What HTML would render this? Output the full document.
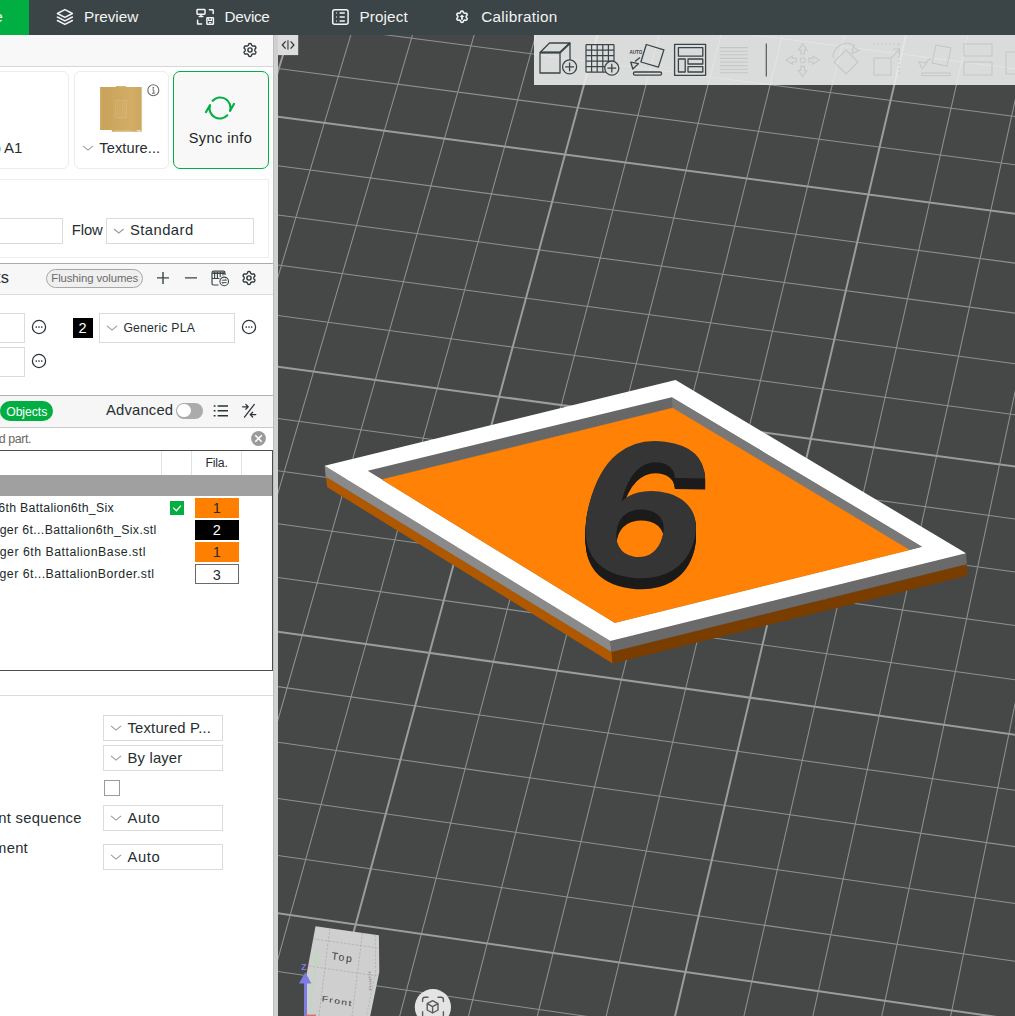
<!DOCTYPE html>
<html lang="en"><head><meta charset="utf-8"><title>Bambu Studio</title>
<style>
html,body{margin:0;padding:0;background:#fff}
body{width:1015px;height:1016px;overflow:hidden;position:relative;background:#fff;font-family:"Liberation Sans",sans-serif;color:#262E30}
.a{position:absolute;box-sizing:border-box}
.t{position:absolute;white-space:nowrap;line-height:1}
svg{position:absolute;overflow:hidden}
</style></head><body>

<div class="a" style="left:0.00px;top:35.00px;width:273.50px;height:31.50px;background:#F8F8F8;border-bottom:1px solid #D6D6D6"></div>
<div class="a" style="left:-10.00px;top:71.00px;width:78.50px;height:98.00px;border:1px solid #ECECEC;border-radius:6px;background:#fff"></div>
<div class="a" style="left:73.50px;top:71.00px;width:95.00px;height:98.00px;border:1px solid #ECECEC;border-radius:6px;background:#fff"></div>
<div class="a" style="left:173.00px;top:71.00px;width:96.20px;height:98.00px;border:1px solid #00AE42;border-radius:7px;background:#F8F8F8"></div>
<div class="t" style="left:-76.01px;top:140.00px;font-size:15px;color:#262E30;">Bambu Lab A1</div>
<svg style="left:98px;top:84px" width="48" height="50" viewBox="98 84 48 50"><defs><linearGradient id="pg" x1="0" x2="1" y1="0" y2="0"><stop offset="0" stop-color="#C8A259"/><stop offset=".75" stop-color="#D2AD66"/><stop offset="1" stop-color="#CDA75F"/></linearGradient></defs><path d="M100.1 87h15.8v-1.1h10v1.1h15.8v43.1v1.6h-29.9v-1.6h-11.7z" fill="url(#pg)"/><rect x="115.2" y="100.8" width="11.6" height="16.6" fill="none" stroke="#DCC089" stroke-width=".6" opacity=".8"/><path d="M117.6 102v14M120 102v16M122.6 102v14M125 100v17" stroke="#DBBE86" stroke-width=".5" opacity=".8"/><path d="M101.6 89v38" stroke="#D9BC80" stroke-width=".5" opacity=".7"/><path d="M114 131h18" stroke="#E3CC9A" stroke-width=".8"/><path d="M136.8 130.8h4" stroke="#F4EAD2" stroke-width="1.1"/><path d="M117 86.6h7.6" stroke="#DDC28C" stroke-width=".6"/></svg>
<svg style="left:146px;top:83px" width="15" height="15" viewBox="0 0 15 15"><circle cx="7.3" cy="7.3" r="5.5" fill="#fff" stroke="#6B6B6B" stroke-width="1.1"/><circle cx="7.3" cy="4.8" r=".9" fill="#6B6B6B"/><path d="M6.3 6.9h1.5v3.2M6 10.2h2.8" fill="none" stroke="#6B6B6B" stroke-width="1"/></svg>
<svg style="left:82.00px;top:144.20px" width="12.00" height="8" viewBox="0 0 12.00 8"><path d="M1 1.90L6.00 6.10L11.00 1.90" fill="none" stroke="#9A9A9A" stroke-width="1.1"/></svg>
<div class="t" style="left:99.30px;top:140.70px;font-size:14.6px;color:#262E30;letter-spacing:0.095px;">Texture...</div>
<svg style="left:204.4px;top:91.8px" width="32" height="32" viewBox="-16 -16 32 32"><g fill="none" stroke="#00AE42" stroke-width="2.1" stroke-linecap="round" stroke-linejoin="round"><path d="M-7.3 -7.3A10.3 10.3 0 0 1 10 2.9L14.1 -4.2"/><path d="M7.3 7.3A10.3 10.3 0 0 1 -10 -2.9L-14.1 4.2"/></g></svg>
<div class="t" style="left:188.70px;top:130.75px;font-size:14.5px;color:#1A1F21;letter-spacing:0.440px;">Sync info</div>
<svg style="left:241.00px;top:41.00px" width="18" height="18" viewBox="-9 -9 18 18"><path d="M4.85 0.00L4.85 0.21L4.85 0.42L4.88 0.64L4.95 0.87L5.14 1.14L5.46 1.46L5.75 1.81L5.89 2.14L5.89 2.44L5.82 2.72L5.72 2.98L5.59 3.22L5.44 3.46L5.26 3.69L5.06 3.88L4.80 4.03L4.45 4.07L4.00 4.00L3.56 3.88L3.23 3.85L3.00 3.90L2.80 3.99L2.61 4.09L2.43 4.20L2.24 4.31L2.06 4.42L1.88 4.55L1.72 4.73L1.58 5.02L1.46 5.46L1.31 5.89L1.09 6.17L0.83 6.33L0.56 6.40L0.28 6.44L0.00 6.45L-0.28 6.44L-0.56 6.40L-0.83 6.33L-1.09 6.17L-1.31 5.89L-1.46 5.46L-1.58 5.02L-1.72 4.73L-1.88 4.55L-2.06 4.42L-2.24 4.31L-2.42 4.20L-2.61 4.09L-2.80 3.99L-3.00 3.90L-3.23 3.85L-3.56 3.88L-4.00 4.00L-4.45 4.07L-4.80 4.03L-5.06 3.88L-5.26 3.69L-5.44 3.46L-5.59 3.23L-5.72 2.98L-5.82 2.72L-5.89 2.44L-5.89 2.14L-5.75 1.81L-5.46 1.46L-5.14 1.14L-4.95 0.87L-4.88 0.64L-4.85 0.42L-4.85 0.21L-4.85 0.00L-4.85 -0.21L-4.85 -0.42L-4.88 -0.64L-4.95 -0.87L-5.14 -1.14L-5.46 -1.46L-5.75 -1.81L-5.89 -2.14L-5.89 -2.44L-5.82 -2.72L-5.72 -2.98L-5.59 -3.23L-5.44 -3.46L-5.26 -3.69L-5.06 -3.88L-4.80 -4.03L-4.45 -4.07L-4.00 -4.00L-3.56 -3.88L-3.23 -3.85L-3.00 -3.90L-2.80 -3.99L-2.61 -4.09L-2.43 -4.20L-2.24 -4.31L-2.06 -4.42L-1.88 -4.55L-1.72 -4.73L-1.58 -5.02L-1.46 -5.46L-1.31 -5.89L-1.09 -6.17L-0.83 -6.33L-0.56 -6.40L-0.28 -6.44L-0.00 -6.45L0.28 -6.44L0.56 -6.40L0.83 -6.33L1.09 -6.17L1.31 -5.89L1.46 -5.46L1.58 -5.02L1.72 -4.73L1.88 -4.55L2.06 -4.42L2.24 -4.31L2.42 -4.20L2.61 -4.09L2.80 -3.99L3.00 -3.90L3.23 -3.85L3.56 -3.88L4.00 -4.00L4.45 -4.07L4.80 -4.03L5.06 -3.88L5.26 -3.69L5.44 -3.46L5.59 -3.22L5.72 -2.98L5.82 -2.72L5.89 -2.44L5.89 -2.14L5.75 -1.81L5.46 -1.46L5.14 -1.14L4.95 -0.87L4.88 -0.64L4.85 -0.42L4.85 -0.21Z" fill="none" stroke="#2E3638" stroke-width="1.4" stroke-linejoin="round"/><circle r="2.1" fill="none" stroke="#2E3638" stroke-width="1.4"/></svg>
<div class="a" style="left:-10.00px;top:179.00px;width:279.00px;height:79.00px;border:1px solid #EEEEEE;background:#fff"></div>
<div class="a" style="left:-10.00px;top:218.00px;width:73.00px;height:26.00px;border:1px solid #DBDBDB;background:#fff"></div>
<div class="t" style="left:71.70px;top:222.60px;font-size:14.8px;color:#262E30;letter-spacing:-0.062px;">Flow</div>
<div class="a" style="left:106.00px;top:218.00px;width:148.00px;height:26.00px;border:1px solid #DBDBDB;background:#fff"></div>
<svg style="left:112.80px;top:227.00px" width="11.60" height="8" viewBox="0 0 11.60 8"><path d="M1 1.98L5.80 6.02L10.60 1.98" fill="none" stroke="#9A9A9A" stroke-width="1.1"/></svg>
<div class="t" style="left:130.00px;top:222.60px;font-size:14.8px;color:#262E30;letter-spacing:0.441px;">Standard</div>
<div class="a" style="left:0.00px;top:263.00px;width:273.50px;height:32.00px;background:#F7F7F7;border-top:1px solid #ABABAB;border-bottom:1px solid #DEDEDE"></div>
<div class="t" style="left:-62.19px;top:268.80px;font-size:16.4px;color:#262E30;">Filaments</div>
<div class="a" style="left:46.00px;top:269.30px;width:97.00px;height:18.70px;border:1px solid #A8A8A8;border-radius:10px;background:#EFEFEF"></div>
<div class="t" style="left:51.30px;top:273.30px;font-size:11.4px;color:#6B6B6B;letter-spacing:-0.113px;">Flushing volumes</div>
<svg style="left:155px;top:270px" width="44" height="16" viewBox="155 270 44 16"><path d="M157 277.9h12M163 271.9v12M185 277.9h12" stroke="#3B4446" stroke-width="1.4" fill="none"/></svg>
<svg style="left:210px;top:269px" width="20" height="18" viewBox="210 269 20 18"><g fill="none" stroke="#3B4446" stroke-width="1.2"><path d="M212 278.5v-5.5q0-1.8 1.8-1.8h9.4q1.8 0 1.8 1.8v2"/><path d="M212 278.5h7.5M212 278.5v5q0 1.5 1.5 1.5h5"/><path d="M214.6 272v6M217.4 272v6M220.2 272v5M223 272v3.5" stroke-width="1.1"/><path d="M212.3 273.2h12.5" stroke-width="1.6"/></g><circle cx="224.2" cy="281.4" r="4.3" fill="#F7F7F7" stroke="#3B4446" stroke-width="1.1"/><path d="M221.8 280.2h4.6l-1.2-1.2M226.6 282.6h-4.6l1.2 1.2" fill="none" stroke="#3B4446" stroke-width=".9"/></svg>
<svg style="left:240.00px;top:268.90px" width="18" height="18" viewBox="-9 -9 18 18"><path d="M4.85 0.00L4.85 0.21L4.85 0.42L4.88 0.64L4.95 0.87L5.14 1.14L5.46 1.46L5.75 1.81L5.89 2.14L5.89 2.44L5.82 2.72L5.72 2.98L5.59 3.22L5.44 3.46L5.26 3.69L5.06 3.88L4.80 4.03L4.45 4.07L4.00 4.00L3.56 3.88L3.23 3.85L3.00 3.90L2.80 3.99L2.61 4.09L2.43 4.20L2.24 4.31L2.06 4.42L1.88 4.55L1.72 4.73L1.58 5.02L1.46 5.46L1.31 5.89L1.09 6.17L0.83 6.33L0.56 6.40L0.28 6.44L0.00 6.45L-0.28 6.44L-0.56 6.40L-0.83 6.33L-1.09 6.17L-1.31 5.89L-1.46 5.46L-1.58 5.02L-1.72 4.73L-1.88 4.55L-2.06 4.42L-2.24 4.31L-2.42 4.20L-2.61 4.09L-2.80 3.99L-3.00 3.90L-3.23 3.85L-3.56 3.88L-4.00 4.00L-4.45 4.07L-4.80 4.03L-5.06 3.88L-5.26 3.69L-5.44 3.46L-5.59 3.23L-5.72 2.98L-5.82 2.72L-5.89 2.44L-5.89 2.14L-5.75 1.81L-5.46 1.46L-5.14 1.14L-4.95 0.87L-4.88 0.64L-4.85 0.42L-4.85 0.21L-4.85 0.00L-4.85 -0.21L-4.85 -0.42L-4.88 -0.64L-4.95 -0.87L-5.14 -1.14L-5.46 -1.46L-5.75 -1.81L-5.89 -2.14L-5.89 -2.44L-5.82 -2.72L-5.72 -2.98L-5.59 -3.23L-5.44 -3.46L-5.26 -3.69L-5.06 -3.88L-4.80 -4.03L-4.45 -4.07L-4.00 -4.00L-3.56 -3.88L-3.23 -3.85L-3.00 -3.90L-2.80 -3.99L-2.61 -4.09L-2.43 -4.20L-2.24 -4.31L-2.06 -4.42L-1.88 -4.55L-1.72 -4.73L-1.58 -5.02L-1.46 -5.46L-1.31 -5.89L-1.09 -6.17L-0.83 -6.33L-0.56 -6.40L-0.28 -6.44L-0.00 -6.45L0.28 -6.44L0.56 -6.40L0.83 -6.33L1.09 -6.17L1.31 -5.89L1.46 -5.46L1.58 -5.02L1.72 -4.73L1.88 -4.55L2.06 -4.42L2.24 -4.31L2.42 -4.20L2.61 -4.09L2.80 -3.99L3.00 -3.90L3.23 -3.85L3.56 -3.88L4.00 -4.00L4.45 -4.07L4.80 -4.03L5.06 -3.88L5.26 -3.69L5.44 -3.46L5.59 -3.22L5.72 -2.98L5.82 -2.72L5.89 -2.44L5.89 -2.14L5.75 -1.81L5.46 -1.46L5.14 -1.14L4.95 -0.87L4.88 -0.64L4.85 -0.42L4.85 -0.21Z" fill="none" stroke="#2E3638" stroke-width="1.4" stroke-linejoin="round"/><circle r="2.1" fill="none" stroke="#2E3638" stroke-width="1.4"/></svg>
<div class="a" style="left:-10.00px;top:313.00px;width:34.80px;height:30.00px;border:1px solid #DBDBDB"></div>
<div class="a" style="left:-10.00px;top:347.00px;width:34.80px;height:30.00px;border:1px solid #DBDBDB"></div>
<svg style="left:29.9px;top:317.9px" width="18" height="18" viewBox="-9 -9 18 18"><circle r="6.6" fill="none" stroke="#2B3436" stroke-width="1.25"/><circle cx="-2.7" r=".85" fill="#2B3436"/><circle r=".85" fill="#2B3436"/><circle cx="2.7" r=".85" fill="#2B3436"/></svg>
<svg style="left:29.9px;top:351.9px" width="18" height="18" viewBox="-9 -9 18 18"><circle r="6.6" fill="none" stroke="#2B3436" stroke-width="1.25"/><circle cx="-2.7" r=".85" fill="#2B3436"/><circle r=".85" fill="#2B3436"/><circle cx="2.7" r=".85" fill="#2B3436"/></svg>
<svg style="left:240px;top:317.9px" width="18" height="18" viewBox="-9 -9 18 18"><circle r="6.6" fill="none" stroke="#2B3436" stroke-width="1.25"/><circle cx="-2.7" r=".85" fill="#2B3436"/><circle r=".85" fill="#2B3436"/><circle cx="2.7" r=".85" fill="#2B3436"/></svg>
<div class="a" style="left:73.10px;top:318.10px;width:19.80px;height:19.70px;background:#000"></div>
<div class="t" style="left:78.60px;top:320.75px;font-size:14.5px;color:#fff;">2</div>
<div class="a" style="left:99.00px;top:313.00px;width:136.00px;height:30.00px;border:1px solid #DBDBDB"></div>
<svg style="left:105.70px;top:324.20px" width="12.00" height="8" viewBox="0 0 12.00 8"><path d="M1 1.90L6.00 6.10L11.00 1.90" fill="none" stroke="#9A9A9A" stroke-width="1.1"/></svg>
<div class="t" style="left:123.40px;top:321.90px;font-size:12.2px;color:#262E30;letter-spacing:0.230px;">Generic PLA</div>
<div class="a" style="left:0.00px;top:395.00px;width:273.50px;height:32.50px;background:#F6F6F6;border-top:1px solid #B0B0B0;border-bottom:1px solid #CACACA"></div>
<div class="a" style="left:-20.00px;top:401.00px;width:21.20px;height:20.00px;background:#DADADA;border-radius:10px"></div>
<div class="a" style="left:0.30px;top:401.00px;width:52.50px;height:20.00px;background:#00AE42;border-radius:10px"></div>
<div class="t" style="left:6.20px;top:405.90px;font-size:12.2px;color:#fff;letter-spacing:-0.037px;">Objects</div>
<div class="t" style="left:106.10px;top:402.60px;font-size:14.8px;color:#262E30;letter-spacing:0.159px;">Advanced</div>
<div class="a" style="left:176.30px;top:403.00px;width:26.70px;height:15.60px;background:#ABABAB;border-radius:8px"></div>
<div class="a" style="left:177.30px;top:404.20px;width:13.30px;height:13.30px;background:#fff;border-radius:7px"></div>
<svg style="left:212px;top:403px" width="18" height="16" viewBox="212 403 18 16"><g stroke="#2B3436" stroke-width="1.5" fill="none"><path d="M217.6 405.9h10.4M217.6 410.8h10.4M217.6 415.7h10.4"/><path d="M213.7 405.9h1.8M213.7 410.8h1.8M213.7 415.7h1.8"/></g></svg>
<svg style="left:240px;top:402px" width="18" height="18" viewBox="240 402 18 18"><g stroke="#2B3436" stroke-width="1.25" fill="none" stroke-linecap="round" stroke-linejoin="round"><path d="M244.5 417.2L254.3 404.4"/><path d="M242.6 406.8h5.6M245.8 404.4l2.4 2.4l-2.4 2.4"/><path d="M255.8 414.6h-5.6M252.6 412.2l-2.4 2.4l2.4 2.4"/></g></svg>
<div class="t" style="left:-155.23px;top:432.80px;font-size:12.4px;color:#6E6660;letter-spacing:-0.369px;">Right-click to search object and part.</div>
<svg style="left:250px;top:430px" width="17" height="17" viewBox="-8.5 -8.5 17 17"><circle r="7.4" fill="#9B9B9B"/><path d="M-3.2 -3.2L3.2 3.2M3.2 -3.2L-3.2 3.2" stroke="#fff" stroke-width="1.6"/></svg>
<div class="a" style="left:-10.00px;top:449.80px;width:283.00px;height:221.00px;border:1px solid #4C4C4C;background:#fff"></div>
<div class="a" style="left:161.00px;top:451.00px;width:1.00px;height:24.40px;background:#E2E2E2"></div>
<div class="a" style="left:191.20px;top:451.00px;width:1.00px;height:24.40px;background:#E2E2E2"></div>
<div class="a" style="left:241.10px;top:451.00px;width:1.00px;height:24.40px;background:#E2E2E2"></div>
<div class="t" style="left:205.40px;top:456.85px;font-size:12.3px;color:#262E30;letter-spacing:-0.207px;">Fila.</div>
<div class="a" style="left:0.00px;top:475.40px;width:272.00px;height:21.00px;background:#A0A0A0"></div>
<div class="t" style="left:-68.11px;top:501.85px;font-size:12.3px;color:#20282A;letter-spacing:0.319px;">Challenger 6th Battalion6th_Six</div>
<div class="t" style="left:-44.64px;top:523.85px;font-size:12.3px;color:#20282A;letter-spacing:0.367px;">Challenger 6t...Battalion6th_Six.stl</div>
<div class="t" style="left:-45.68px;top:545.85px;font-size:12.3px;color:#20282A;letter-spacing:0.520px;">Challenger 6th BattalionBase.stl</div>
<div class="t" style="left:-45.56px;top:567.85px;font-size:12.3px;color:#20282A;letter-spacing:0.483px;">Challenger 6t...BattalionBorder.stl</div>
<svg style="left:170px;top:501px" width="14" height="14" viewBox="0 0 14 14"><rect width="14" height="14" fill="#00AE42"/><path d="M3.2 6.6L6.4 9.8L10.9 4.6" fill="none" stroke="#fff" stroke-width="1.3"/></svg>
<div class="a" style="left:195.10px;top:498.00px;width:43.90px;height:19.70px;background:#FF8000;"></div>
<div class="t" style="left:212.87px;top:500.75px;font-size:14.5px;color:#2B2B2B;">1</div>
<div class="a" style="left:195.10px;top:520.10px;width:43.90px;height:19.70px;background:#000;"></div>
<div class="t" style="left:212.87px;top:522.75px;font-size:14.5px;color:#fff;">2</div>
<div class="a" style="left:195.10px;top:542.00px;width:43.90px;height:19.70px;background:#FF8000;"></div>
<div class="t" style="left:212.87px;top:544.75px;font-size:14.5px;color:#2B2B2B;">1</div>
<div class="a" style="left:195.10px;top:564.30px;width:43.90px;height:19.70px;background:#fff;border:1px solid #6A6A6A;"></div>
<div class="t" style="left:212.87px;top:567.75px;font-size:14.5px;color:#2B2B2B;">3</div>
<div class="a" style="left:0.00px;top:695.20px;width:273.50px;height:1.00px;background:#DCDCDC"></div>
<div class="a" style="left:103.00px;top:715.00px;width:120.00px;height:26.00px;border:1px solid #DBDBDB"></div>
<svg style="left:109.70px;top:724.20px" width="12.10" height="8" viewBox="0 0 12.10 8"><path d="M1 1.88L6.05 6.12L11.10 1.88" fill="none" stroke="#9A9A9A" stroke-width="1.1"/></svg>
<div class="t" style="left:127.50px;top:720.60px;font-size:14.8px;color:#262E30;letter-spacing:0.186px;">Textured P...</div>
<div class="a" style="left:103.00px;top:745.00px;width:120.00px;height:26.00px;border:1px solid #DBDBDB"></div>
<svg style="left:109.70px;top:754.20px" width="12.10" height="8" viewBox="0 0 12.10 8"><path d="M1 1.88L6.05 6.12L11.10 1.88" fill="none" stroke="#9A9A9A" stroke-width="1.1"/></svg>
<div class="t" style="left:127.50px;top:750.60px;font-size:14.8px;color:#262E30;letter-spacing:0.180px;">By layer</div>
<div class="a" style="left:103.00px;top:805.00px;width:120.00px;height:26.00px;border:1px solid #DBDBDB"></div>
<svg style="left:109.70px;top:814.20px" width="12.10" height="8" viewBox="0 0 12.10 8"><path d="M1 1.88L6.05 6.12L11.10 1.88" fill="none" stroke="#9A9A9A" stroke-width="1.1"/></svg>
<div class="t" style="left:127.50px;top:810.60px;font-size:14.8px;color:#262E30;letter-spacing:0.588px;">Auto</div>
<div class="a" style="left:103.00px;top:844.00px;width:120.00px;height:26.00px;border:1px solid #DBDBDB"></div>
<svg style="left:109.70px;top:853.20px" width="12.10" height="8" viewBox="0 0 12.10 8"><path d="M1 1.88L6.05 6.12L11.10 1.88" fill="none" stroke="#9A9A9A" stroke-width="1.1"/></svg>
<div class="t" style="left:127.50px;top:849.60px;font-size:14.8px;color:#262E30;letter-spacing:0.588px;">Auto</div>
<div class="a" style="left:104.10px;top:780.20px;width:15.90px;height:15.60px;border:1px solid #9A9A9A;background:#fff"></div>
<div class="t" style="left:-47.63px;top:810.60px;font-size:14.8px;color:#262E30;letter-spacing:0.257px;">Filament sequence</div>
<div class="t" style="left:-74.19px;top:840.60px;font-size:14.8px;color:#262E30;letter-spacing:0.247px;">Auto alignment</div>
<div class="a" style="left:273.00px;top:35.00px;width:5.00px;height:981.00px;background:#D0D0D0;border-left:1px solid #BDBDBD"></div>
<svg style="left:278px;top:35px" width="737" height="981" viewBox="278 35 737 981">
<rect x="278" y="35" width="737" height="981" fill="#464848"/>
<path d="M-55.4 -207.2L-607.7 1330.7M1.9 -200.0L-540.3 1341.0M116.8 -185.4L-405.1 1361.8M174.5 -178.1L-337.2 1372.2M232.2 -170.7L-269.2 1382.6M290.0 -163.4L-201.0 1393.1M406.1 -148.7L-64.3 1414.0M464.2 -141.3L4.4 1424.6M522.5 -133.9L73.1 1435.1M580.9 -126.5L142.1 1445.7M698.0 -111.6L280.4 1466.9M756.7 -104.2L349.8 1477.5M815.5 -96.7L419.3 1488.2M874.5 -89.3L489.0 1498.9M992.7 -74.3L628.9 1520.3M1052.0 -66.7L699.1 1531.1M1111.4 -59.2L769.5 1541.9M1170.9 -51.7L840.0 1552.7M1290.2 -36.5L981.4 1574.4M1350.1 -28.9L1052.4 1585.3M1410.1 -21.3L1123.6 1596.2M1470.1 -13.7L1194.9 1607.1M1590.6 1.6L1338.0 1629.1M1651.1 9.3L1409.8 1640.1M1711.6 16.9L1481.8 1651.1M1772.3 24.6L1553.9 1662.2M1893.9 40.1L1698.7 1684.4M1954.9 47.8L1771.3 1695.5M2016.1 55.6L1844.1 1706.7M2077.3 63.3L1917.1 1717.9M2200.2 78.9L2063.5 1740.4M2261.8 86.7L2137.0 1751.6M2323.5 94.6L2210.6 1762.9M2385.3 102.4L2284.4 1774.2M-55.4 -207.2L2447.3 110.3M-86.7 -119.9L2442.3 204.7M-102.7 -75.6L2439.7 252.7M-118.8 -30.7L2437.2 301.2M-135.0 14.6L2434.6 350.3M-168.1 106.7L2429.3 450.1M-184.9 153.5L2426.6 500.9M-201.9 200.8L2423.8 552.2M-219.1 248.6L2421.1 604.2M-254.0 345.9L2415.5 709.9M-271.8 395.4L2412.6 763.7M-289.8 445.4L2409.7 818.1M-308.0 496.0L2406.8 873.2M-344.9 599.0L2400.9 985.3M-363.7 651.4L2397.8 1042.4M-382.8 704.3L2394.8 1100.2M-402.0 757.9L2391.7 1158.7M-441.2 867.0L2385.4 1277.8M-461.2 922.6L2382.1 1338.5M-481.3 978.8L2378.9 1400.0M-501.8 1035.7L2375.6 1462.2M-543.4 1151.5L2368.8 1589.1M-564.6 1210.5L2365.4 1653.7M-586.0 1270.2L2361.9 1719.2M-607.7 1330.7L2358.4 1785.6" stroke="#8E918F" stroke-width="1.05" fill="none"/>
<path d="M59.3 -192.7L-472.8 1351.4M348.0 -156.0L-132.7 1403.5M639.4 -119.1L211.1 1456.3M933.5 -81.8L558.9 1509.6M1230.5 -44.1L910.6 1563.5M1530.3 -6.1L1266.4 1618.1M1833.0 32.4L1626.2 1673.3M2138.7 71.1L1990.2 1729.1M-71.0 -163.8L2444.8 157.2M-151.5 60.4L2431.9 399.9M-236.5 297.0L2418.3 656.7M-326.3 547.2L2403.9 928.9M-421.5 812.2L2388.5 1217.9M-522.4 1093.2L2372.2 1525.2" stroke="#9A9D9A" stroke-width="2" fill="none"/>
<polygon points="325.8,476.9 611.5,652.2 612.7,663.5 327.3,487.3" fill="#B05800"/>
<polygon points="611.5,652.2 966.9,564.4 967.2,575.7 612.7,663.5" fill="#7A3D00"/>
<polygon points="324.6,465.8 610.3,641.0 611.5,652.2 325.8,476.9" fill="#8A8A8A"/>
<polygon points="610.3,641.0 966.0,553.2 966.9,564.4 611.5,652.2" fill="#6A6A6A"/>
<path d="M325.8 476.9L611.5 652.2" stroke="#B35A00" stroke-width=".5"/>
<path d="M611.5 652.2L966.9 564.4" stroke="#7A3D00" stroke-width=".5"/>
<polygon points="324.6,465.8 675.6,380.1 966.0,553.2 610.3,641.0" fill="#FFFFFF"/>
<polygon points="367.7,470.8 671.7,397.2 922.0,546.7 614.8,622.7" fill="#676767"/>
<polygon points="671.7,397.2 922.0,546.7 909.6,549.9 672.6,407.9" fill="#787878"/>
<polygon points="382.0,479.5 672.6,407.9 909.6,549.9 614.8,622.7" fill="#FF8106" stroke="#FF8106" stroke-width=".35" stroke-linejoin="miter"/>
<defs><filter id="ex" x="-20%" y="-20%" width="140%" height="150%" color-interpolation-filters="sRGB">
<feFlood flood-color="#1B1B1B"/><feComposite in2="SourceAlpha" operator="in" result="s"/>
<feOffset in="s" dy="1" result="o1"/>
<feOffset in="s" dy="2" result="o2"/>
<feOffset in="s" dy="3" result="o3"/>
<feOffset in="s" dy="4" result="o4"/>
<feOffset in="s" dy="5" result="o5"/>
<feOffset in="s" dy="6" result="o6"/>
<feOffset in="s" dy="7" result="o7"/>
<feOffset in="s" dy="8" result="o8"/>
<feOffset in="s" dy="9" result="o9"/>
<feOffset in="s" dy="10" result="o10"/>
<feOffset in="s" dy="11" result="o11"/>
<feMerge><feMergeNode in="o11"/><feMergeNode in="o10"/><feMergeNode in="o9"/><feMergeNode in="o8"/><feMergeNode in="o7"/><feMergeNode in="o6"/><feMergeNode in="o5"/><feMergeNode in="o4"/><feMergeNode in="o3"/><feMergeNode in="o2"/><feMergeNode in="o1"/><feMergeNode in="SourceGraphic"/></feMerge></filter></defs>
<g filter="url(#ex)"><text transform="matrix(2.28175 0.31281 -0.48324 1.91796 564.75 566.6)" font-family="Liberation Sans, sans-serif" font-weight="bold" font-size="100" fill="#353535">6</text></g>
<rect x="278" y="35" width="20.2" height="20.1" fill="#DDDDDD"/>
<path d="M285.6 41.3L282.3 45L285.6 48.7M290.6 41.3L293.9 45L290.6 48.7" stroke="#2E3436" stroke-width="1.25" fill="none"/><path d="M287.9 40.2V49.7" stroke="#7C7C7C" stroke-width="1.9"/>
<rect x="534" y="35" width="481" height="50" fill="#EFEFEF" opacity=".88"/>
<g fill="none" stroke="#3B4446" stroke-width="1.3" stroke-linejoin="round">
<path d="M540 52.5h20v20.5h-20zM540 52.5L549.5 43h20.5L560 52.5M570 43v17" /><path d="M540 52.5h20L570 43" stroke-width="1.8"/>
<circle cx="569.6" cy="66.9" r="7" fill="#DBDBDB"/><path d="M565.2 66.9h8.8M569.6 62.5v8.8"/>
<path d="M586.0 44.6v27.6M591.6 44.6v27.6M597.2 44.6v27.6M602.8 44.6v27.6M608.4 44.6v27.6M614.0 44.6v27.6M586 44.60h28M586 50.12h28M586 55.64h28M586 61.16h28M586 66.68h28M586 72.20h28" stroke-width="1.2"/>
<circle cx="611.8" cy="68.2" r="7" fill="#DBDBDB"/><path d="M607.4 68.2h8.8M611.8 63.8v8.8"/>
<path d="M646.3 44.5L663.9 49.9L658.4 67.1L640.9 62Z"/><path d="M639.9 57.5L635 61.6M630.8 62.2L638.4 63.7L632.8 69Z"/><rect x="633.4" y="72" width="28.2" height="3.2" rx="1.6"/>
<rect x="674.6" y="44.3" width="31" height="31"/><rect x="678.4" y="47.6" width="24.4" height="8.6"/><rect x="678.4" y="59" width="6.8" height="13"/><rect x="688" y="59" width="14.8" height="5"/><rect x="688" y="66.6" width="14.8" height="5.4"/>
</g>
<text x="629.4" y="54" font-family="Liberation Sans, sans-serif" font-weight="bold" font-size="5.6" fill="#3B4446" textLength="12.8" lengthAdjust="spacingAndGlyphs">AUTO</text>
<path d="M720 47.6h28M720 51.2h28M720 54.8h28M720 58.4h28M720 62.0h28M720 65.6h28M720 69.2h28M720 72.8h28" stroke="#C6C6C6" stroke-width="1.1" fill="none"/>
<path d="M766.3 43.5v33" stroke="#555B5C" stroke-width="1.2"/>
<g fill="none" stroke="#C7C7C7" stroke-width="1.1">
<g transform="translate(802.7 60.2) scale(1.38) translate(-802 -60)" stroke-width=".8"><circle cx="802" cy="60" r="1.8"/><path d="M799 52.5l3-4.5l3 4.5h-1.7v3h-2.6v-3zM799 67.5l3 4.5l3-4.5h-1.7v-3h-2.6v3zM794.5 57l-4.5 3l4.5 3v-1.7h3v-2.6h-3zM809.5 57l4.5 3l-4.5 3v-1.7h-3v-2.6h3z"/></g>
<path d="M846 50l12 12l-12 12l-12-12z"/><path d="M833 58a14 14 0 0 1 22-12M853 47l6 3.5l-7 3z"/>
<rect x="874" y="58" width="17" height="17"/><path d="M873 44h26M899 44v32" stroke-dasharray="2 2"/><path d="M891 58l8-8M893 49h6.5v6.5"/>
<path d="M936 45l15 3l-4 18l-15-3z"/><path d="M931 58l-6 5M919 62l8 1l-5 6z"/><rect x="922" y="73" width="28" height="2.6"/>
<rect x="964" y="44" width="28" height="12"/><rect x="964" y="62" width="28" height="13"/><path d="M1015 52h-9v22h9"/>
</g>
<polygon points="315.5,926.3 378.9,935.3 379.3,972 370.2,1016 305.5,1016 306.4,975" fill="#CFCFCF"/>
<path d="M313.3 938.8L378.8 948.2M308.8 966L377 976M329.8 928.4L319 1016M362.5 933L352 1016" stroke="#A9A9A9" stroke-width=".7" stroke-dasharray="2.4 1.5" fill="none"/>
<path d="M375.2 934.8L375.6 972L366.5 1016" stroke="#ADADAD" stroke-width=".7" stroke-dasharray="2.4 1.5" fill="none"/>
<text transform="matrix(0.99 0.15 -0.10 0.98 331.3 959.2)" font-family="Liberation Sans, sans-serif" font-size="10.5" fill="#3C3C3C" textLength="20.5">Top</text>
<text transform="matrix(0.99 0.16 -0.08 0.76 321.4 1001.3)" font-family="Liberation Sans, sans-serif" font-size="10.5" fill="#3C3C3C" textLength="30">Front</text>
<text transform="matrix(-0.05 -0.9 0.35 -0.1 371.5 990.5)" font-family="Liberation Sans, sans-serif" font-size="9" fill="#8A8A8A" textLength="22">Right</text>
<path d="M316.3 947.6L313.2 962.5L319.3 962.5Z" fill="#B4DDB4" opacity=".6"/><path d="M316 962L309 1014" stroke="#B4DDB4" stroke-width="2" opacity=".5"/>
<path d="M305.5 983V1016" stroke="#7C7CE0" stroke-width="3"/><path d="M305.3 972.2L299 983.4H311.4Z" fill="#7C7CE0"/>
<text x="301.2" y="969.8" font-family="Liberation Sans, sans-serif" font-weight="bold" font-size="8.4" fill="#7C7CE0">Z</text>
<path d="M305.5 1015.4H316" stroke="#E06A6A" stroke-width="1.6"/>
<circle cx="432.9" cy="1007.1" r="18.1" fill="#E4E4E4"/>
<g fill="none" stroke="#5C5C5C" stroke-width="1.4" stroke-linecap="round" stroke-linejoin="round"><path d="M422.6 1001.5v-2q0-2.2 2.2-2.2h3.2M438 997.3h3.2q2.2 0 2.2 2.2v2M422.6 1011.6v4M443.4 1011.6v4"/><path d="M432.6 1000.6L438 1003.6V1010L432.6 1013L427.2 1010V1003.6ZM427.2 1003.6L432.6 1006.7L438 1003.6M432.6 1006.7V1013"/></g>
</svg>
<div class="a" style="left:0.00px;top:0.00px;width:1015.00px;height:35.00px;background:#3B4446"></div>
<div class="a" style="left:0.00px;top:0.00px;width:29.00px;height:35.00px;background:#00AE42"></div>
<div class="t" style="left:-51.30px;top:8.85px;font-size:15.3px;color:#fff;letter-spacing:-0.062px;">Prepare</div>
<div class="t" style="left:84.00px;top:8.85px;font-size:15.3px;color:#F2F4F4;letter-spacing:-0.031px;">Preview</div>
<div class="t" style="left:224.60px;top:8.85px;font-size:15.3px;color:#F2F4F4;letter-spacing:-0.295px;">Device</div>
<div class="t" style="left:359.40px;top:8.85px;font-size:15.3px;color:#F2F4F4;letter-spacing:0.126px;">Project</div>
<div class="t" style="left:481.20px;top:8.85px;font-size:15.3px;color:#F2F4F4;letter-spacing:0.296px;">Calibration</div>
<svg style="left:50px;top:4px" width="430" height="27" viewBox="50 4 430 27"><g fill="none" stroke="#F4F5F5" stroke-width="1.5" stroke-linejoin="round" stroke-linecap="round">
<path d="M64.9 9.6L72.4 13.5L64.9 17.4L57.4 13.5Z"/><path d="M57.4 17L64.9 20.9L72.4 17"/><path d="M57.4 20.5L64.9 24.4L72.4 20.5"/>
<rect x="197" y="9.6" width="8" height="4.6" rx=".6"/><path d="M201 14.4v2M199.2 16.6h3.6"/><rect x="206.9" y="17.7" width="6.5" height="6.6" rx=".6"/><path d="M208.6 18.8v1.6h2.9v-1.6M209.3 22.5h1.6" stroke-width="1.1"/><path d="M197.6 20.2v3.8h4M209.4 9.8h3.2q.6 0 .6 .6v3.2"/>
<rect x="332.7" y="9.7" width="15.4" height="14.6" rx="2"/><path d="M339.6 12.9h5.2M339.6 17h5.2M339.6 21.1h5.2M336 12.9h.7M336 17h.7M336 21.1h.7" stroke-linecap="butt"/>
<path d="M466.25 16.70L466.25 16.92L466.27 17.15L466.34 17.39L466.50 17.66L466.78 17.98L467.04 18.34L467.14 18.67L467.12 18.98L467.03 19.26L466.89 19.52L466.73 19.77L466.53 19.99L466.28 20.17L465.94 20.24L465.50 20.20L465.08 20.12L464.76 20.11L464.53 20.18L464.32 20.27L464.12 20.38L463.93 20.50L463.75 20.63L463.57 20.80L463.42 21.08L463.28 21.48L463.10 21.88L462.86 22.14L462.59 22.27L462.30 22.33L462.00 22.35L461.70 22.33L461.41 22.27L461.14 22.14L460.90 21.88L460.72 21.48L460.58 21.08L460.43 20.80L460.25 20.63L460.07 20.50L459.88 20.38L459.68 20.27L459.47 20.18L459.24 20.11L458.92 20.12L458.50 20.20L458.06 20.24L457.72 20.17L457.47 19.99L457.27 19.77L457.11 19.52L456.97 19.26L456.88 18.98L456.86 18.67L456.96 18.34L457.22 17.98L457.50 17.66L457.66 17.39L457.73 17.15L457.75 16.92L457.75 16.70L457.75 16.48L457.73 16.25L457.66 16.01L457.50 15.74L457.22 15.42L456.96 15.06L456.86 14.73L456.88 14.42L456.97 14.14L457.11 13.88L457.27 13.63L457.47 13.41L457.72 13.23L458.06 13.16L458.50 13.20L458.92 13.28L459.24 13.29L459.47 13.22L459.68 13.13L459.88 13.02L460.07 12.90L460.25 12.77L460.43 12.60L460.58 12.32L460.72 11.92L460.90 11.52L461.14 11.26L461.41 11.13L461.70 11.07L462.00 11.05L462.30 11.07L462.59 11.13L462.86 11.26L463.10 11.52L463.28 11.92L463.42 12.32L463.57 12.60L463.75 12.77L463.93 12.90L464.12 13.02L464.32 13.13L464.53 13.22L464.76 13.29L465.08 13.28L465.50 13.20L465.94 13.16L466.28 13.23L466.53 13.41L466.73 13.63L466.89 13.88L467.03 14.14L467.12 14.42L467.14 14.73L467.04 15.06L466.78 15.42L466.50 15.74L466.34 16.01L466.27 16.25L466.25 16.48Z" stroke-width="1.6"/>
<path d="M459.7 17.1L462 14.6L464.4 17.1H462.9V19.7H461.1V17.1Z" fill="#F4F5F5" stroke="none"/>
</g></svg>
</body></html>
